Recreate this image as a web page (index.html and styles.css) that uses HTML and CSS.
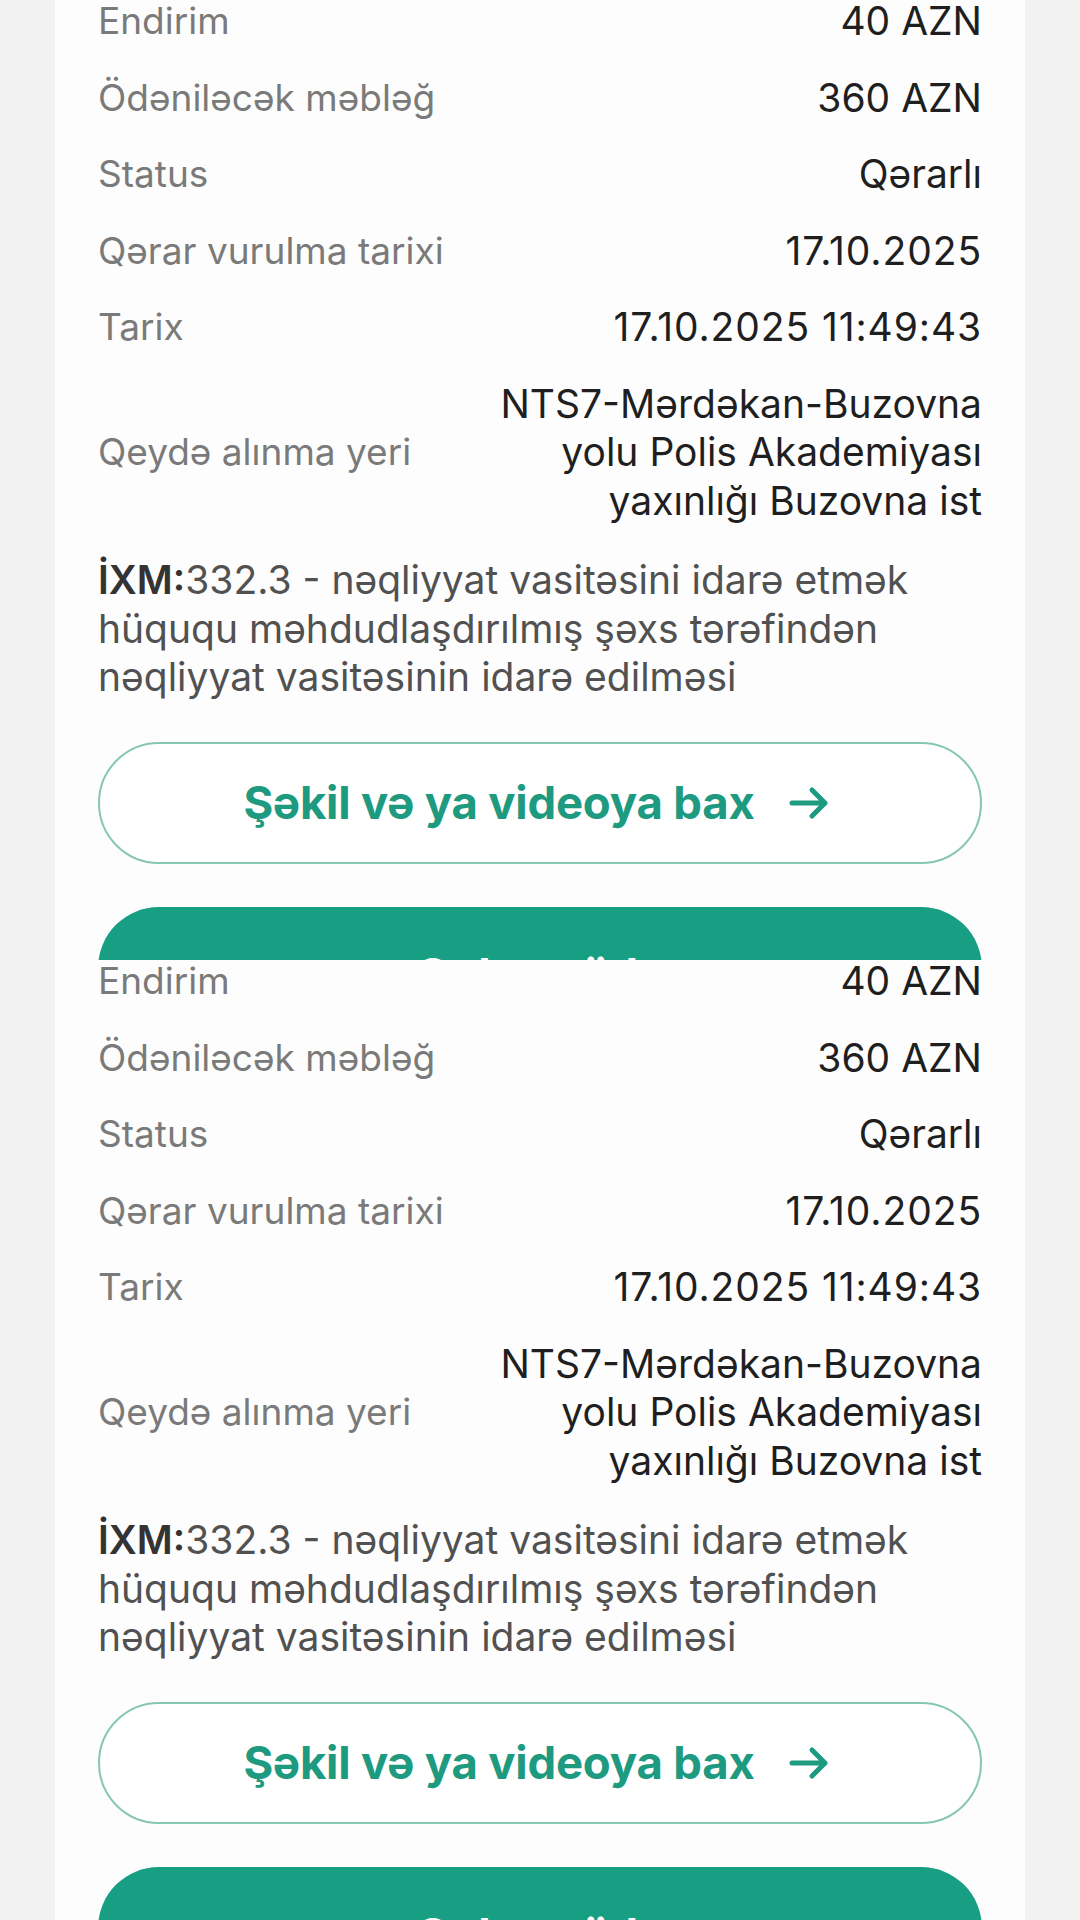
FILE: index.html
```html
<!DOCTYPE html>
<html lang="az">
<head>
    <meta charset="UTF-8">
    <meta name="viewport" content="width=device-width, initial-scale=1.0">
    <title>Protokol</title>
    <link rel="stylesheet" href="styles.css">
</head>
<body>
    <!-- First screenshot -->
    <div class="screen">
        <div class="card">
            <div class="row"><span class="label">Endirim</span><span class="value">40 AZN</span></div>
            <div class="row"><span class="label">Ödəniləcək məbləğ</span><span class="value">360 AZN</span></div>
            <div class="row"><span class="label">Status</span><span class="value">Qərarlı</span></div>
            <div class="row"><span class="label">Qərar vurulma tarixi</span><span class="value num">17.10.2025</span></div>
            <div class="row"><span class="label">Tarix</span><span class="value num">17.10.2025 11:49:43</span></div>
            <div class="row"><span class="label">Qeydə alınma yeri</span><span class="value">NTS7-Mərdəkan-Buzovna<br>yolu Polis Akademiyası<br>yaxınlığı Buzovna ist</span></div>
            <p class="article"><b>İXM:</b>332.3 - nəqliyyat vasitəsini idarə etmək hüququ məhdudlaşdırılmış şəxs tərəfindən nəqliyyat vasitəsinin idarə edilməsi</p>
            <button class="btn btn-outline">Şəkil və ya videoya bax
                <svg class="arrow" width="40" height="34" viewBox="0 0 40 34"><path d="M3 17H36M23 4L36 17L23 30" fill="none" stroke="currentColor" stroke-width="5" stroke-linecap="round" stroke-linejoin="round"/></svg>
            </button>
            <button class="btn btn-fill">Onlayn ödə</button>
        </div>
    </div>

    <!-- Second screenshot (same view) -->
    <div class="screen">
        <div class="card">
            <div class="row"><span class="label">Endirim</span><span class="value">40 AZN</span></div>
            <div class="row"><span class="label">Ödəniləcək məbləğ</span><span class="value">360 AZN</span></div>
            <div class="row"><span class="label">Status</span><span class="value">Qərarlı</span></div>
            <div class="row"><span class="label">Qərar vurulma tarixi</span><span class="value num">17.10.2025</span></div>
            <div class="row"><span class="label">Tarix</span><span class="value num">17.10.2025 11:49:43</span></div>
            <div class="row"><span class="label">Qeydə alınma yeri</span><span class="value">NTS7-Mərdəkan-Buzovna<br>yolu Polis Akademiyası<br>yaxınlığı Buzovna ist</span></div>
            <p class="article"><b>İXM:</b>332.3 - nəqliyyat vasitəsini idarə etmək hüququ məhdudlaşdırılmış şəxs tərəfindən nəqliyyat vasitəsinin idarə edilməsi</p>
            <button class="btn btn-outline">Şəkil və ya videoya bax
                <svg class="arrow" width="40" height="34" viewBox="0 0 40 34"><path d="M3 17H36M23 4L36 17L23 30" fill="none" stroke="currentColor" stroke-width="5" stroke-linecap="round" stroke-linejoin="round"/></svg>
            </button>
            <button class="btn btn-fill">Onlayn ödə</button>
        </div>
    </div>
</body>
</html>
```

FILE: styles.css
```css
body {
    margin: 0;
    font-family: Inter, "Noto Sans", sans-serif;
    background-color: #f2f2f2;
}
.screen {
    height: 960px;
    overflow: hidden;
    background-color: #f2f2f2;
}
.card {
    background-color: #fdfdfd;
    margin: -17px 55px 0;
    padding: 0 43px 40px;
}
.row {
    display: flex;
    justify-content: space-between;
    align-items: center;
    padding: 14px 0;
    line-height: 48.5px;
}
.label { font-size: 37px; color: #7a7a7a; }
.value { font-size: 39px; color: #1f1f1f; text-align: right; }
.num { letter-spacing: 0.9px; }
.article {
    margin: 17px 0 0;
    font-size: 39px;
    line-height: 48.5px;
    color: #515151;
}
.article b { font-weight: 600; color: #333; }
.btn {
    display: flex;
    justify-content: center;
    align-items: center;
    gap: 34px;
    width: 100%;
    height: 122px;
    border-radius: 61px;
    font-family: inherit;
    font-size: 45.5px;
    font-weight: 700;
    letter-spacing: -0.2px;
    cursor: pointer;
}
.btn-outline {
    margin-top: 40px;
    padding-right: 14px;
    background-color: #fff;
    border: 2.5px solid #86c7b0;
    color: #1d9a7f;
}
.btn-fill {
    margin-top: 43px;
    padding-top: 14px;
    background-color: #179e83;
    border: none;
    color: #fff;
}
.arrow { flex-shrink: 0; }
```
